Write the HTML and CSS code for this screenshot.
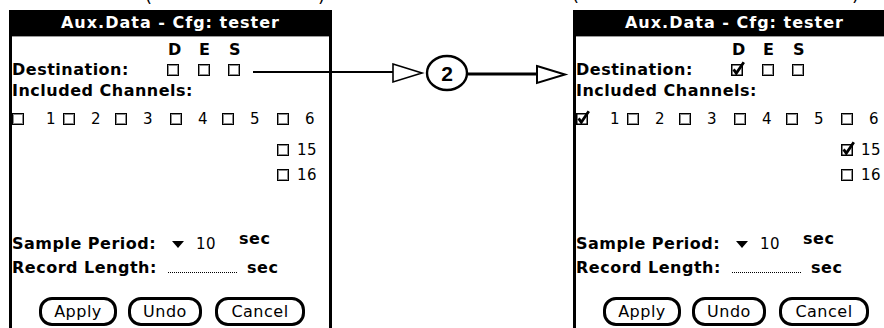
FILE: index.html
```html
<!DOCTYPE html>
<html lang="en">
<head>
<meta charset="utf-8">
<title>Aux.Data - Cfg: tester</title>
<link rel="stylesheet" href="styles.css">
</head>
<body>
<div class="stage">
  <section class="screen">
    <div class="title">Aux.Data - Cfg: tester</div>
    <div class="panel">
      <div class="rule"></div>
      <div class="dest-grid row-des">
        <span></span>
        <span class="des">D</span><span class="des">E</span><span class="des">S</span>
      </div>
      <div class="dest-grid row-dest">
        <span class="bold">Destination:</span>
        <span class="cb"></span><span class="cb"></span><span class="cb"></span>
      </div>
      <div class="row-inc bold">Included Channels:</div>
      <div class="chan-grid">
        <span class="cell first"><span class="cb"></span><span class="num">1</span></span>
        <span class="cell"><span class="cb"></span><span class="num">2</span></span>
        <span class="cell"><span class="cb"></span><span class="num">3</span></span>
        <span class="cell"><span class="cb"></span><span class="num">4</span></span>
        <span class="cell"><span class="cb"></span><span class="num">5</span></span>
        <span class="cell"><span class="cb"></span><span class="num">6</span></span>
      </div>
      <div class="chan-extra r15"><span class="cb"></span><span class="num">15</span></div>
      <div class="chan-extra r16"><span class="cb"></span><span class="num">16</span></div>
      <div class="spacer"></div>
      <div class="field row-sample">
        <span class="bold lbl-sample">Sample Period:</span>
        <span class="tri"></span>
        <span class="num val">10</span>
        <span class="bold sec-up">sec</span>
      </div>
      <div class="field row-record">
        <span class="bold lbl-record">Record Length:</span>
        <span class="dots"></span>
        <span class="bold sec">sec</span>
      </div>
      <div class="buttons">
        <span class="btn btn-apply">Apply</span>
        <span class="btn btn-undo">Undo</span>
        <span class="btn btn-cancel">Cancel</span>
      </div>
    </div>
  </section>

  <section class="screen">
    <div class="title">Aux.Data - Cfg: tester</div>
    <div class="panel">
      <div class="rule"></div>
      <div class="dest-grid row-des">
        <span></span>
        <span class="des">D</span><span class="des">E</span><span class="des">S</span>
      </div>
      <div class="dest-grid row-dest">
        <span class="bold">Destination:</span>
        <svg class="cb-on" viewBox="0 0 12 12" width="12" height="12"><rect x="0.75" y="0.75" width="10.5" height="10.5" fill="none" stroke="#000" stroke-width="1.5"/><path d="M2.6 5.4 L5.3 9.3 L12.8 -1.8" fill="none" stroke="#000" stroke-width="2.8"/></svg>
        <span class="cb"></span><span class="cb"></span>
      </div>
      <div class="row-inc bold">Included Channels:</div>
      <div class="chan-grid">
        <span class="cell first"><svg class="cb-on" viewBox="0 0 12 12" width="12" height="12"><rect x="0.75" y="0.75" width="10.5" height="10.5" fill="none" stroke="#000" stroke-width="1.5"/><path d="M2.6 5.4 L5.3 9.3 L12.8 -1.8" fill="none" stroke="#000" stroke-width="2.8"/></svg><span class="num">1</span></span>
        <span class="cell"><span class="cb"></span><span class="num">2</span></span>
        <span class="cell"><span class="cb"></span><span class="num">3</span></span>
        <span class="cell"><span class="cb"></span><span class="num">4</span></span>
        <span class="cell"><span class="cb"></span><span class="num">5</span></span>
        <span class="cell"><span class="cb"></span><span class="num">6</span></span>
      </div>
      <div class="chan-extra r15"><svg class="cb-on" viewBox="0 0 12 12" width="12" height="12"><rect x="0.75" y="0.75" width="10.5" height="10.5" fill="none" stroke="#000" stroke-width="1.5"/><path d="M2.6 5.4 L5.3 9.3 L12.8 -1.8" fill="none" stroke="#000" stroke-width="2.8"/></svg><span class="num">15</span></div>
      <div class="chan-extra r16"><span class="cb"></span><span class="num">16</span></div>
      <div class="spacer"></div>
      <div class="field row-sample">
        <span class="bold lbl-sample">Sample Period:</span>
        <span class="tri"></span>
        <span class="num val">10</span>
        <span class="bold sec-up">sec</span>
      </div>
      <div class="field row-record">
        <span class="bold lbl-record">Record Length:</span>
        <span class="dots"></span>
        <span class="bold sec">sec</span>
      </div>
      <div class="buttons">
        <span class="btn btn-apply">Apply</span>
        <span class="btn btn-undo">Undo</span>
        <span class="btn btn-cancel">Cancel</span>
      </div>
    </div>
  </section>

  <svg class="annot" width="884" height="328" viewBox="0 0 884 328">
    <text class="paren" x="145" y="2">(</text>
    <text class="paren" x="318" y="2">)</text>
    <text class="paren" x="572" y="1">(</text>
    <text class="paren" x="852" y="1">)</text>
    <line x1="253" y1="72" x2="393" y2="72" stroke="#000" stroke-width="2"/>
    <polygon points="393,64 422,73 393,82" fill="#fff" stroke="#000" stroke-width="1.6"/>
    <ellipse cx="447" cy="73" rx="20" ry="17" fill="#fff" stroke="#000" stroke-width="2.4"/>
    <text class="step" x="447" y="81">2</text>
    <line x1="468" y1="74" x2="537" y2="74" stroke="#000" stroke-width="3"/>
    <polygon points="537,66 565,74.5 537,83" fill="#fff" stroke="#000" stroke-width="2"/>
  </svg>
</div>
</body>
</html>
```

FILE: styles.css
```css
html, body {
  margin: 0;
  padding: 0;
  background: #fff;
  overflow: hidden;
}

.stage {
  position: relative;
  width: 884px;
  height: 328px;
  overflow: hidden;
  display: flex;
  gap: 241px;
  padding: 10px 0 0 9px;
  box-sizing: border-box;
  background: #fff;
  font-family: "DejaVu Sans", sans-serif;
  color: #000;
}

.screen {
  flex: none;
  width: 323px;
  height: 340px;
  display: flex;
  flex-direction: column;
}

.title {
  height: 26px;
  line-height: 26px;
  background: #000;
  color: #fff;
  font-weight: bold;
  font-size: 16px;
  letter-spacing: 1px;
  text-align: center;
  white-space: nowrap;
}

.panel {
  flex: 1;
  border-left: 3px solid #000;
  border-right: 3px solid #000;
  display: flex;
  flex-direction: column;
}

.rule {
  height: 1px;
  background: #9a9a9a;
}

.bold {
  font-weight: bold;
  font-size: 16px;
  letter-spacing: 0.5px;
  white-space: nowrap;
}

.num {
  font-size: 15px;
  letter-spacing: 0.5px;
  white-space: nowrap;
}

.dest-grid {
  display: grid;
  grid-template-columns: 155px 31px 30px 30px;
  align-items: center;
}

.row-des {
  margin-top: 1px;
  height: 24px;
  line-height: 24px;
}

.des {
  font-weight: bold;
  font-size: 16px;
  padding-left: 1px;
}

.row-dest {
  height: 16px;
  line-height: 16px;
}

.cb {
  display: block;
  width: 12px;
  height: 12px;
  box-sizing: border-box;
  border: 1px solid #000;
  box-shadow: inset 0 0 0 1px rgba(0, 0, 0, 0.45);
  flex: none;
}

.cb-on {
  display: block;
  overflow: visible;
  flex: none;
}

.row-inc {
  height: 26px;
  line-height: 26px;
}

.chan-grid {
  height: 30px;
  display: grid;
  grid-template-columns: 51px 52px 55px 52px 55px auto;
  align-items: center;
}

.cell {
  display: flex;
  align-items: center;
  gap: 16px;
}

.cell.first {
  gap: 22px;
}

.chan-extra {
  display: flex;
  align-items: center;
  gap: 8px;
  padding-left: 265px;
}

.r15 {
  height: 32px;
}

.r16 {
  height: 18px;
}

.spacer {
  height: 48px;
}

.field {
  display: flex;
  align-items: baseline;
  height: 24px;
  line-height: 24px;
}

.lbl-sample {
  width: 160px;
}

.tri {
  width: 0;
  height: 0;
  border-left: 6.5px solid transparent;
  border-right: 6.5px solid transparent;
  border-top: 7px solid #000;
  align-self: center;
}

.val {
  margin-left: 12px;
  width: 43px;
}

.sec-up {
  align-self: flex-start;
  line-height: 14px;
}

.lbl-record {
  width: 156px;
}

.dots {
  width: 69px;
  height: 1px;
  border-bottom: 1px dotted #000;
}

.sec {
  margin-left: 10px;
}

.buttons {
  display: flex;
  margin-top: 17px;
  padding-left: 27px;
}

.btn {
  height: 29px;
  box-sizing: border-box;
  border: 3px solid #000;
  border-radius: 13px;
  display: flex;
  align-items: center;
  justify-content: center;
  font-size: 16px;
  letter-spacing: 0.5px;
}

.btn-apply { width: 78px; }
.btn-undo { width: 74px; margin-left: 11px; }
.btn-cancel { width: 90px; margin-left: 13px; }

.annot {
  position: absolute;
  left: 0;
  top: 0;
  pointer-events: none;
}

.paren {
  font-family: "DejaVu Sans", sans-serif;
  font-size: 18px;
}

.step {
  font-family: "Liberation Sans", Arial, sans-serif;
  font-weight: bold;
  font-size: 21px;
  text-anchor: middle;
}
```
